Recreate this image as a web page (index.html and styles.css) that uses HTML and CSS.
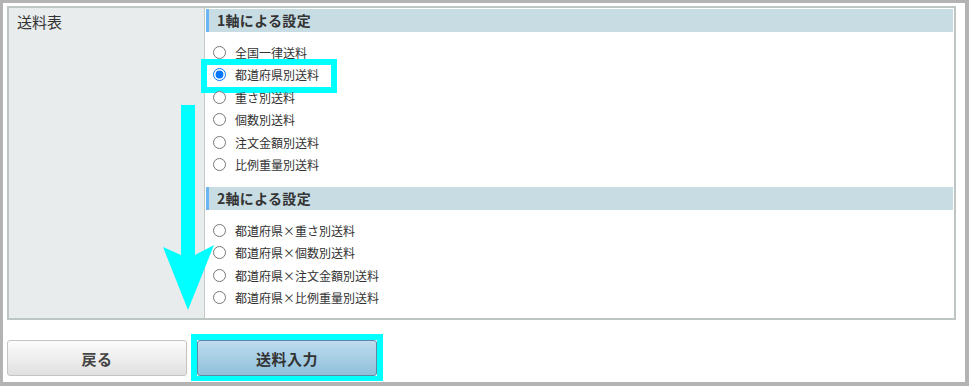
FILE: index.html
```html
<!DOCTYPE html>
<html lang="ja">
<head>
  <meta charset="UTF-8">
  <title>送料表</title>
  <link rel="stylesheet" href="styles.css">
</head>
<body>
  <div class="screen">
    <div class="form-table">
      <div class="form-label">送料表</div>
      <div class="form-body">
        <h2 class="axis-title">1軸による設定</h2>
        <ul class="options">
          <li><label><input type="radio" name="shipping">全国一律送料</label></li>
          <li><span class="mark"></span><label><input type="radio" name="shipping" checked>都道府県別送料</label></li>
          <li><label><input type="radio" name="shipping">重さ別送料</label></li>
          <li><label><input type="radio" name="shipping">個数別送料</label></li>
          <li><label><input type="radio" name="shipping">注文金額別送料</label></li>
          <li><label><input type="radio" name="shipping">比例重量別送料</label></li>
        </ul>
        <h2 class="axis-title">2軸による設定</h2>
        <ul class="options options-last">
          <li><label><input type="radio" name="shipping">都道府県×重さ別送料</label></li>
          <li><label><input type="radio" name="shipping">都道府県×個数別送料</label></li>
          <li><label><input type="radio" name="shipping">都道府県×注文金額別送料</label></li>
          <li><label><input type="radio" name="shipping">都道府県×比例重量別送料</label></li>
        </ul>
      </div>
    </div>

    <div class="actions">
      <button class="btn">戻る</button>
      <span class="btn-mark"><button class="btn btn-primary">送料入力</button></span>
    </div>

    <!-- 注釈の矢印 -->
    <svg class="arrow" width="56" height="214" viewBox="0 0 56 214">
      <polygon points="21,5 35,5 35,155 54,145 28,210 3,147 21,155" fill="#00ffff" />
    </svg>
  </div>
</body>
</html>
```

FILE: styles.css
```css
body {
  margin: 0;
  font-family: "Noto Sans CJK JP", "Noto Sans", sans-serif;
  color: #333;
}
.screen {
  position: relative;
  box-sizing: border-box;
  width: 969px;
  height: 386px;
  border: 3px solid #b3b3b3;
  border-right-width: 4px;
  border-bottom-width: 4px;
  padding: 3px 9px 0 4px;
  background: #fff;
}
.form-table {
  display: flex;
  border: 2px solid #bdc6c3;
}
.form-label {
  width: 196px;
  box-sizing: border-box;
  padding: 4px 8px;
  font-size: 15px;
  line-height: 20px;
  background-color: #e8ecec;
  border-right: 1px solid #c3cbc8;
}
.form-body {
  flex: 1;
  padding: 1px;
}
.axis-title {
  margin: 0;
  height: 23px;
  line-height: 23px;
  padding-left: 8px;
  font-size: 14px;
  font-weight: bold;
  letter-spacing: 0.3px;
  color: #333;
  background-color: #c7dde3;
  border-left: 3px solid #6bb5f2;
}
.options {
  list-style: none;
  margin: 0;
  padding: 9px 0 11px;
}
.options-last {
  padding-bottom: 8px;
}
.options li {
  position: relative;
  height: 22.5px;
  display: flex;
  align-items: center;
  padding-left: 7px;
  font-size: 12px;
}
.options label {
  display: flex;
  align-items: center;
  gap: 9px;
}
.options input[type="radio"] {
  width: 13px;
  height: 13px;
  margin: 0;
}
.mark {
  position: absolute;
  left: -5px;
  top: -5px;
  width: 136px;
  height: 34px;
  box-sizing: border-box;
  border: 6px solid #00ffff;
}
.actions {
  display: flex;
  gap: 10px;
  margin-top: 20px;
}
.btn {
  width: 180px;
  height: 36px;
  font-family: inherit;
  font-size: 15px;
  font-weight: bold;
  letter-spacing: 0.5px;
  color: #444;
  border: 1px solid #c4c4c4;
  border-radius: 3px;
  background: linear-gradient(#fcfcfc, #e0e0e0);
  cursor: pointer;
}
.btn-primary {
  color: #333;
  border-color: #5d87a3;
  background: linear-gradient(#bedcee, #8fc0da);
}
.btn-mark {
  position: relative;
  display: flex;
}
.btn-mark::after {
  content: "";
  position: absolute;
  left: -6px;
  top: -6px;
  right: -6px;
  bottom: -5px;
  border: 6px solid #00ffff;
  border-bottom-width: 5px;
}
.arrow {
  position: absolute;
  left: 157px;
  top: 97px;
}
```
